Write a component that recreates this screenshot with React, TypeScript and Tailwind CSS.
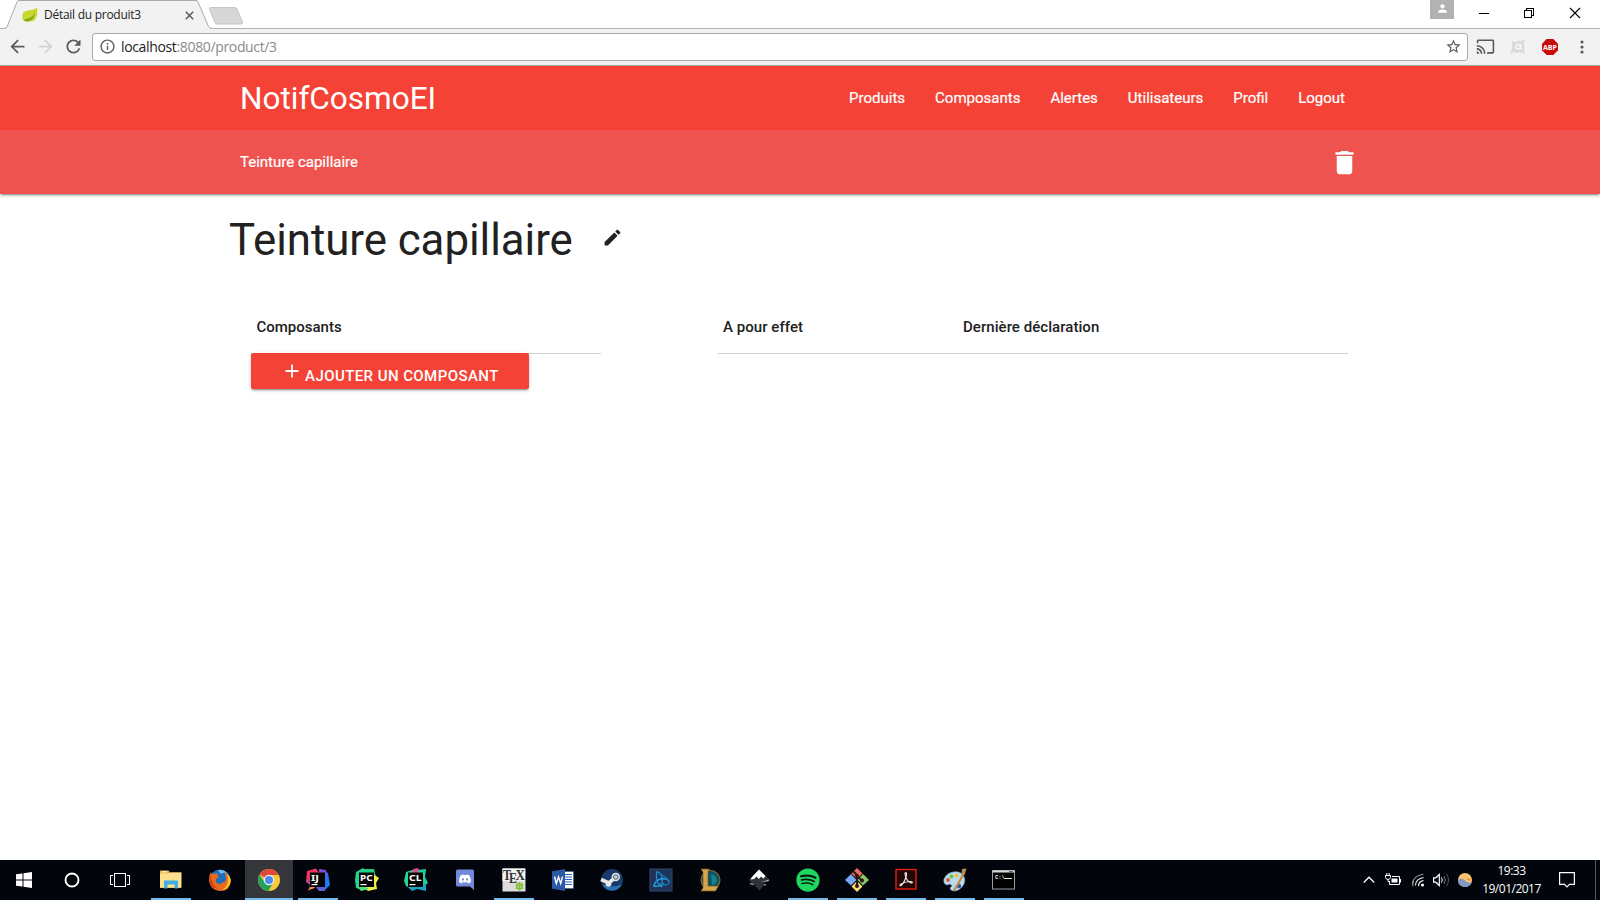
import React from "react";
import {
  MdAdd,
  MdArrowBack,
  MdArrowForward,
  MdCast,
  MdDelete,
  MdEdit,
  MdInfoOutline,
  MdPerson,
  MdRefresh,
  MdStarBorder,
} from "react-icons/md";
import { FaDiscord, FaSpotify } from "react-icons/fa";

function Tab() {
  return (
    <div className="relative ml-[4px] h-[29px] w-[208px]">
      <svg className="absolute inset-0" width="208" height="29" viewBox="0 0 208 29">
        <path d="M0 29 L1 28.500 Q2.500 28 3 26.500 L13 2 Q13.800 .5 15 .5 H192 Q193.500 .5 194 2 L204 26.500 Q204.500 28 207 28.500 V29Z" fill="#f2f2f2" />
        <path d="M0 28.500 Q2.500 28.500 3.200 26.500 L13 2 Q13.800 .5 15 .5 H192 Q193.500 .5 194 2 L204.500 26.500 Q205.500 28.500 208 28.500" fill="none" stroke="#a9a9a9" />
      </svg>
      <div className="relative flex h-[29px] items-center pl-[18px]">
        <svg width="16" height="16" viewBox="0 0 17 16" className="mt-px">
          <path d="M1 6 C3 2 12 4 16 0 C17 8 15 15 9 15 C5 15.500 2 14 1 13 C.5 11 .3 8 1 6Z" fill="#c5d82b" />
          <path d="M1 13 C7 12 12 10 14 5 C13 12 9 15 4 14.800Z" fill="#8aa51c" />
        </svg>
        <span className="ml-[6px] w-[140px] font-['Open_Sans','Noto_Sans',sans-serif] text-[12px] tracking-[-0.27px] text-[#222]">Détail du produit3</span>
        <svg width="9" height="9" viewBox="0 0 9 9" className="ml-px mt-px">
          <path d="M.8 .8 L8.200 8.200 M8.200 .8 L.8 8.200" stroke="#5a5a5a" strokeWidth="1.500" />
        </svg>
      </div>
    </div>
  );
}

function TabStrip() {
  return (
    <div className="flex h-[29px] shrink-0 bg-white bg-[linear-gradient(#b5b5b5,#b5b5b5)] bg-[length:100%_1px] bg-bottom bg-no-repeat">
      <Tab />
      <svg width="36" height="20" viewBox="0 0 36 20" className="-ml-[4px] mt-[6px]">
        <path d="M3 1.500 H26 Q28 1.500 29 3 L34.500 16 Q35 18 33 18 H9 Q7.500 18 7 16.500 L1.500 3.500 Q1 1.500 3 1.500Z" fill="#d7d7d7" stroke="#c4c4c4" />
      </svg>
      <div className="ml-auto flex">
        <div className="flex h-[19px] w-6 items-center justify-center bg-[#b2b2b2] text-white">
          <MdPerson size={13} className="-mt-[3px]" />
        </div>
        <svg width="146" height="28" viewBox="0 0 146 28" fill="none" stroke="#000" shapeRendering="crispEdges">
          <path d="M25 13.500 H35" />
          <path d="M70.500 10.500 H77.500 V17.500 H70.500Z M72.500 10.500 V8.500 H79.500 V15.500 H77.500" />
          <path d="M116 8 L126 18 M126 8 L116 18" shapeRendering="auto" strokeWidth="1.100" />
        </svg>
      </div>
    </div>
  );
}

function Toolbar() {
  return (
    <div className="flex h-[37px] shrink-0 items-center border-b border-[#aeaeae] bg-[#f2f2f2] text-[#5a5a5a]">
      <MdArrowBack size={21} className="-mt-px ml-[7px]" />
      <MdArrowForward size={21} className="-mt-px ml-[7px] text-[#d3d3d3]" />
      <MdRefresh size={21} className="-mt-px ml-[7px]" />
      <div className="ml-[8px] flex h-7 w-[1376px] items-center rounded-[3px] border border-[#a9a9a9] bg-white">
        <MdInfoOutline size={17} className="-mt-px ml-[6px]" />
        <span className="-mt-[2px] ml-[5px] font-['Open_Sans','Noto_Sans',sans-serif] text-[14px] tracking-[-0.35px] text-[#8a8a8a]">
          <span className="text-[#222]">localhost</span>:8080/product/3
        </span>
        <MdStarBorder size={17} className="-mt-px ml-auto mr-[5px]" />
      </div>
      <MdCast size={19} className="-mt-px ml-[8px]" />
      <svg width="18" height="18" viewBox="0 0 18 18" className="-mt-px ml-[14px]">
        <path d="M3 3 L7 4 Q9 2 11.500 3 L16 1 L15 6 Q16 10 15 12 L16 16 L11 14 Q7 16 5 14 L1 16 L3 10Z" fill="#dadada" />
        <circle cx="9" cy="8.700" r="2.200" fill="none" stroke="#f7f7f7" strokeWidth="1.400" />
        <path d="M11.700 5.500 V10 Q12.200 11.500 13.500 11" fill="none" stroke="#f7f7f7" strokeWidth="1.200" />
      </svg>
      <svg width="16" height="16" viewBox="0 0 16 16" className="ml-[15px]">
        <path d="M4.700 0 H11.300 L16 4.700 V11.300 L11.300 16 H4.700 L0 11.300 V4.700Z" fill="#c90808" />
        <text x="8" y="10.800" fontFamily="Open Sans" fontWeight="700" fontSize="7.800" textAnchor="middle" textLength="14" lengthAdjust="spacingAndGlyphs" fill="#fff">ABP</text>
      </svg>
      <svg width="4" height="14" viewBox="0 0 4 14" className="ml-[22px]" fill="#5a5a5a">
        <circle cx="2" cy="2" r="1.600" />
        <circle cx="2" cy="7" r="1.600" />
        <circle cx="2" cy="12" r="1.600" />
      </svg>
    </div>
  );
}

const links = ["Produits", "Composants", "Alertes", "Utilisateurs", "Profil", "Logout"];

function Nav() {
  return (
    <header className="relative shrink-0 text-white shadow-[0_2px_2px_0_rgba(0,0,0,0.14),0_1px_5px_0_rgba(0,0,0,0.12),0_3px_1px_-2px_rgba(0,0,0,0.2)]">
      <div className="h-16 bg-[#f44336]">
        <div className="mx-auto flex h-full w-[1120px] items-center justify-between">
          <span className="pt-px text-[31.5px]">NotifCosmoEI</span>
          <nav className="flex text-[15px] [-webkit-text-stroke:0.2px_white]">
            {links.map((l) => (
              <a key={l} className="px-[15px]">{l}</a>
            ))}
          </nav>
        </div>
      </div>
      <div className="h-16 bg-[#ef5350]">
        <div className="mx-auto flex h-full w-[1120px] items-center justify-between">
          <span className="text-[15px] [-webkit-text-stroke:0.2px_white]">Teinture capillaire</span>
          <MdDelete size={31} className="mt-px" />
        </div>
      </div>
    </header>
  );
}

function Content() {
  return (
    <main className="flex-1 bg-white text-[#212121]">
      <div className="ml-[229px] flex h-[107px] items-start pt-[22px]">
        <h3 className="text-[43.8px] leading-[48px] tracking-[-0.04px]">Teinture capillaire</h3>
        <MdEdit size={21} className="ml-[29px] mt-[11px]" />
      </div>
      <div className="ml-[251px] flex text-[15px] font-medium leading-[22px]">
        <div className="w-[350px]">
          <div className="h-[53px] border-b border-[#d0d0d0] pl-[5.5px] pt-[15px]">Composants</div>
          <button className="relative -mt-px flex h-9 w-[278px] rounded-[2px] bg-[#f44336] text-white shadow-[0_2px_2px_0_rgba(0,0,0,0.14),0_1px_5px_0_rgba(0,0,0,0.12),0_3px_1px_-2px_rgba(0,0,0,0.2)]">
            <MdAdd size={22} className="ml-[29.5px] mt-[7px]" />
            <span className="ml-[2.5px] mt-[12px] whitespace-nowrap text-[15px] tracking-[0.43px]">AJOUTER UN COMPOSANT</span>
          </button>
        </div>
        <div className="ml-[117px] flex h-[53px] w-[630px] border-b border-[#d0d0d0] pl-[5px] pt-[15px]">
          <span className="w-[240px] tracking-[0.05px]">A pour effet</span>
          <span className="tracking-[0.05px]">Dernière déclaration</span>
        </div>
      </div>
    </main>
  );
}

function Svg({ children }: { children: React.ReactNode }) {
  return (
    <svg width="24" height="24" viewBox="0 0 24 24">
      {children}
    </svg>
  );
}

function JetBrains({ label, children }: { label: string; children: React.ReactNode }) {
  return (
    <Svg>
      {children}
      <rect x="4" y="4.500" width="15" height="14.500" fill="#050505" />
      <text x="5" y="13" fontFamily="Noto Sans" fontWeight="700" fontSize="9.500" textLength={label === "IJ" ? 8 : 12.5} lengthAdjust="spacingAndGlyphs" fill="#fff">{label}</text>
      <rect x="5.500" y="16" width="6" height="1.200" fill="#fff" />
    </Svg>
  );
}

const apps: { name: string; open?: boolean; active?: boolean; icon: React.ReactNode }[] = [
  {
    name: "explorer",
    open: true,
    icon: (
      <Svg>
        <path d="M1 2.500 H9.500 L11 4.500 H22 V20 H1Z" fill="#e9b84a" />
        <path d="M1 5.500 H10 L12 4.500 H22.500 V19.500 H1Z" fill="#fbe08e" />
        <path d="M3 3.300 H8 V4.300 H3Z" fill="#fff" />
        <path d="M5 20.500 V12.500 H19 V20.500 H15.500 V16.500 H8.500 V20.500Z" fill="#3fb0e5" />
      </Svg>
    ),
  },
  {
    name: "firefox",
    icon: (
      <Svg>
        <circle cx="12" cy="12" r="10.500" fill="#1b6fc0" />
        <path d="M10 2.500 Q15 1 19 5 Q15 4 13 6Z" fill="#6cc1f0" />
        <path d="M3 4 Q3 6 5 6 Q8 5 10 6 Q9 8 11 9 L8 11 Q7 15 11 16 Q14 16 15 14 Q18 15 18 9 Q17 6 16 4 Q23 8 23 13 Q22 23 12 23 Q2 22 1 13 Q1 7 3 4Z" fill="#e8691b" />
        <path d="M18.500 5 Q23 9 22.500 14 Q21 21 14 22 Q20 18 20 12 Q20 8 18.500 5Z" fill="#fbc02d" />
        <path d="M3 8 Q3 17 10 21 Q1 19 1.500 12Z" fill="#c63d17" />
      </Svg>
    ),
  },
  {
    name: "chrome",
    open: true,
    active: true,
    icon: (
      <Svg>
        <circle cx="12" cy="12" r="11" fill="#f8c93a" />
        <path d="M12 12 L2.500 6.500 A11 11 0 0 1 21.500 6.500 L21.800 7 H12Z" fill="#dc4a3d" />
        <path d="M2.500 6.500 A11 11 0 0 0 11.500 23 L16.300 14.500 L12 16 L7.700 14.500Z" fill="#23a15a" />
        <circle cx="12" cy="12" r="5.200" fill="#f4f4f4" />
        <circle cx="12" cy="12" r="4.100" fill="#4a8af4" />
      </Svg>
    ),
  },
  {
    name: "intellij",
    open: true,
    icon: (
      <JetBrains label="IJ">
        <path d="M1 3 L10 .5 L14 6 L10 12 L0 14Z" fill="#f5335d" />
        <path d="M14 1 L22 5 L24 17 L18 23 L12 20Z" fill="#1e78f0" />
        <path d="M13 1 L20 2 L21 9 L13 8Z" fill="#7d4fd6" />
        <path d="M1 11 L8 14 L7 20 L2 23 L4 17 L0 14Z" fill="#b14b8e" />
        <path d="M2 22 L7 17 L9 20Z" fill="#f8933a" />
        <path d="M9 18 L18 17 L19 23 L13 23Z" fill="#635bd8" />
      </JetBrains>
    ),
  },
  {
    name: "pycharm",
    icon: (
      <JetBrains label="PC">
        <path d="M1 4 L8 0 L12 4 L7 22 L1 20 L0 12Z" fill="#27d48b" />
        <path d="M9 1 L19 1 L21 10 L12 9Z" fill="#1ecf8b" />
        <path d="M18 6 L24 10 L21 15 L22 21 L13 23 L8 19Z" fill="#f0f04a" />
        <path d="M2 18 L8 17 L14 21 L6 23Z" fill="#4adf80" />
      </JetBrains>
    ),
  },
  {
    name: "clion",
    icon: (
      <JetBrains label="CL">
        <path d="M2 4 L12 1 L14 8 L6 20 L2 18 L0 13Z" fill="#25d88f" />
        <path d="M9 1 L14 0 L17 6 L9 7Z" fill="#e7459c" />
        <path d="M14 2 L22 1 L21 9 L24 15 L17 21 L15 12Z" fill="#20cf9b" />
        <path d="M3 18 L18 17 L22 15 L22 23 L13 21 L8 23Z" fill="#18a6c4" />
      </JetBrains>
    ),
  },
  {
    name: "discord",
    icon: (
      <Svg>
        <path d="M3 3 Q3 1.500 4.500 1.500 H19.500 Q21 1.500 21 3 V22 L17 18.500 H4.500 Q3 18.500 3 17Z" fill="#7289da" />
        <FaDiscord x={5.5} y={4.5} size={13} color="#fff" />
      </Svg>
    ),
  },
  {
    name: "texstudio",
    open: true,
    icon: (
      <Svg>
        <rect x=".5" y=".5" width="23" height="23" fill="#dcdcdc" />
        <path d="M.5 .5 H23 V13 H.5Z" fill="#f4f4f4" />
        <text x="1" y="11.500" fontFamily="Liberation Serif" fontWeight="700" fontSize="14" textLength="8" lengthAdjust="spacingAndGlyphs" fill="#333">T</text>
        <text x="7" y="15" fontFamily="Liberation Serif" fontWeight="700" fontSize="14" textLength="8" lengthAdjust="spacingAndGlyphs" fill="#333">E</text>
        <text x="13.500" y="11.500" fontFamily="Liberation Serif" fontWeight="700" fontSize="14" textLength="9.500" lengthAdjust="spacingAndGlyphs" fill="#333">X</text>
        <circle cx="17.500" cy="18.300" r="2.800" fill="none" stroke="#7fbf2e" strokeWidth="1.500" />
        <path d="M17.500 14 V22.700 M13.500 16 L21.500 20.600 M13.500 20.600 L21.500 16" stroke="#7fbf2e" strokeWidth=".9" />
      </Svg>
    ),
  },
  {
    name: "word",
    icon: (
      <Svg>
        <path d="M12 3.500 H22.500 V20.500 H12Z" fill="#fff" stroke="#2a569a" strokeWidth=".6" />
        <path d="M14 6.500 H21 M14 9 H21 M14 11.500 H21 M14 14 H21 M14 16.500 H21" stroke="#2a66b8" />
        <path d="M1 3.200 L14 1 V23 L1 20.800Z" fill="#2a5aa5" />
        <path d="M3.500 8.500 L5.300 15.500 L7.500 9 L9.700 15.500 L11.500 8.500" fill="none" stroke="#fff" strokeWidth="1.400" />
      </Svg>
    ),
  },
  {
    name: "steam",
    icon: (
      <Svg>
        <circle cx="12" cy="12" r="11" fill="#173a6b" />
        <path d="M2 16 A11 11 0 0 0 22 16 Q12 21 2 16Z" fill="#2a72b4" />
        <path d="M1 11.500 L9 14.800 L13.500 11" fill="none" stroke="#e8e8e8" strokeWidth="3.600" />
        <circle cx="8.500" cy="15.800" r="2.900" fill="#e8e8e8" />
        <circle cx="15.800" cy="9" r="4.200" fill="#e8e8e8" />
        <circle cx="15.800" cy="9" r="2.300" fill="#d0d0d0" stroke="#34527c" />
      </Svg>
    ),
  },
  {
    name: "battlenet",
    icon: (
      <Svg>
        <rect x="1" y="1" width="22" height="22" fill="#1f3357" stroke="#33486e" />
        <g fill="none" strokeWidth="1.300">
          <path d="M8 3.500 Q6.500 10 9 15 Q11 19 13.500 19 M8 3.500 Q12 5 13 10 Q14 14 12 19" stroke="#1f8fd0" />
          <path d="M4.500 18 Q7 11 14 10.500 Q19 10.500 20.500 14 M4.500 18 Q10 19.500 15 15.500" stroke="#27a4e6" />
          <path d="M10 5.500 Q17 8 20.500 14 Q19 17.500 14 17 M6.500 13 Q11 17 18 16.800" stroke="#1376bc" />
        </g>
      </Svg>
    ),
  },
  {
    name: "league",
    icon: (
      <Svg>
        <circle cx="12.500" cy="12" r="9.500" fill="#0d5261" stroke="#8d6c30" strokeWidth="1.100" />
        <path d="M13 6 Q19 7 19 13 Q17 17 14 17Z" fill="#167e8e" />
        <path d="M3 1 H11.500 L10 3.500 V18 H20.500 L17.500 23 H3 L5 20 V4Z" fill="#d3a54c" stroke="#795a20" strokeWidth=".7" />
      </Svg>
    ),
  },
  {
    name: "inkscape",
    icon: (
      <Svg>
        <path d="M12 1.500 L22 11 Q23 13.500 19 13.500 L16 15 Q20 16.500 16 18 L12.500 22.500 L9 19 Q6 18 9 17 L4 14 Q1 12.500 3 10.500Z" fill="#30343a" />
        <path d="M12 1.500 L18.500 8 L16.500 10.500 L14 8.500 L12 11 L9.500 8.500 L7 11 L3.500 11.500 L5 9Z" fill="#fff" />
        <path d="M14 14 L22 11.500 Q22.500 13.500 19 13.500Z" fill="#a8adb5" />
        <path d="M3 15.500 L7 16.500 M17 16.500 L19 17" stroke="#888e96" strokeWidth="1.400" />
      </Svg>
    ),
  },
  { name: "spotify", open: true, icon: <FaSpotify size={24} className="rounded-full bg-[#0b1a10] text-[#1ed760]" /> },
  {
    name: "git",
    open: true,
    icon: (
      <Svg>
        <path d="M12 0 L17.500 5.500 L12 11 L6.500 5.500Z" fill="#ed6b63" />
        <path d="M6 6 L11.500 12 L6 17.500 L0 12Z" fill="#76a9ef" />
        <path d="M18 6 L24 12 L18 17.500 L12.500 12Z" fill="#8cc665" />
        <path d="M12 13 L17.500 18.500 L12 24 L6.500 18.500Z" fill="#f6dc72" />
        <path d="M8.500 3.500 L12 7 V18 M12 8 L17 12.500" fill="none" stroke="#2b1712" strokeWidth="2" />
        <circle cx="12" cy="18" r="2" fill="#2b1712" />
        <circle cx="17" cy="12.500" r="2" fill="#2b1712" />
        <circle cx="12" cy="8" r="2" fill="#2b1712" />
      </Svg>
    ),
  },
  {
    name: "acrobat",
    open: true,
    icon: (
      <Svg>
        <rect x="2" y="1.500" width="20" height="19.500" fill="#230707" stroke="#e81e0c" strokeWidth="1.400" />
        <path d="M11 5 Q13.500 4 12 9 Q10 15 7 17.500 Q5 18 7 16 Q11 13.500 17 13.500 Q20 14.500 17 15 Q12 13 11 6Z" fill="none" stroke="#eee" strokeWidth="1.100" />
      </Svg>
    ),
  },
  {
    name: "paint",
    open: true,
    icon: (
      <Svg>
        <path d="M8 4.500 Q16 2 20 7 Q24 13 19 19 Q13 25 8 22 Q6 20 9 18 Q8 15 4 17 Q0 16 1 11 Q3 6 8 4.500Z" fill="#b9d9ec" stroke="#7fa7bf" strokeWidth=".6" />
        <circle cx="5" cy="12" r="1.900" fill="#e0532b" />
        <circle cx="8.500" cy="8.500" r="1.900" fill="#6fbe44" />
        <circle cx="13.500" cy="7.500" r="1.900" fill="#f2c12e" />
        <circle cx="16" cy="18" r="2.200" fill="#1f5fa8" />
        <path d="M21 5 L15.500 15 L11 22.500" stroke="#cf8232" strokeWidth="2" fill="none" />
        <path d="M18.500 6 L19 1 L23.500 .5 L21.500 7Z" fill="#b98b57" />
      </Svg>
    ),
  },
  {
    name: "cmd",
    open: true,
    icon: (
      <Svg>
        <rect x=".5" y="2.500" width="22" height="18.500" fill="#000" stroke="#9c9c9c" />
        <path d="M.5 3.500 H22.500" stroke="#d8d8d8" strokeWidth="2" />
        <path d="M17 3.500 H21" stroke="#666" />
        <text x="3" y="11" fontFamily="Liberation Mono" fontWeight="700" fontSize="5.500" fill="#eee">C:\</text>
        <path d="M12.500 10.500 H20" stroke="#eee" />
      </Svg>
    ),
  },
];

function Taskbar() {
  return (
    <footer className="flex h-10 shrink-0 bg-[#02050b] text-white">
      <div className="flex w-12 items-center justify-center">
        <svg width="16" height="16" viewBox="0 0 16 16" fill="#fff">
          <path d="M0 2.300 L6.500 1.400 V7.500 H0Z M7.500 1.200 L16 0 V7.500 H7.500Z M0 8.500 H6.500 V14.600 L0 13.700Z M7.500 8.500 H16 V16 L7.500 14.800Z" />
        </svg>
      </div>
      <div className="flex w-12 items-center justify-center">
        <svg width="16" height="16" viewBox="0 0 16 16">
          <circle cx="8" cy="8" r="6.500" fill="none" stroke="#fff" strokeWidth="1.900" />
        </svg>
      </div>
      <div className="flex w-[51px] items-center pl-[14px]">
        <svg width="20" height="14" viewBox="0 0 20 14" fill="none" stroke="#fff" shapeRendering="crispEdges">
          <path d="M4.500 .5 H15.500 V13.500 H4.500Z M3 2.500 H.5 V11.500 H3 M17 2.500 H19.500 V11.500 H17" />
        </svg>
      </div>
      <div className="flex gap-px">
        {apps.map((a) => (
          <div key={a.name} className={a.active ? "flex w-12 flex-col items-center bg-[#353639]" : "flex w-12 flex-col items-center"}>
            <div className="flex h-[38px] items-center pt-[2px]">{a.icon}</div>
            {a.open && <div className={a.active ? "h-[2px] w-12 bg-[#76b9ed]" : "h-[2px] w-10 bg-[#76b9ed]"} />}
          </div>
        ))}
      </div>
      <div className="ml-auto flex items-center">
        <svg width="12" height="8" viewBox="0 0 12 8" fill="none" stroke="#fff" strokeWidth="1.300">
          <path d="M.7 6.500 L6 1.200 L11.300 6.500" />
        </svg>
        <svg width="17" height="13" viewBox="0 0 17 13" className="-mt-px ml-[10px]" fill="none" stroke="#fff">
          <path d="M7 3.500 H14.500 V11.500 H4.500 V8" />
          <path d="M15 6 H16 V9.500 H15Z" fill="#fff" stroke="none" />
          <path d="M6.500 5.500 H12.500 V9.500 H6.500Z" fill="#fff" stroke="none" />
          <path d="M.5 2.500 H5.500 V4.500 Q5 6.500 3 6.500 Q1 6.500 .5 4.500Z M1.800 0 V2.500 M4.200 0 V2.500 M3 6.500 V8.500 H5" />
        </svg>
        <svg width="14" height="14" viewBox="0 0 14 14" className="ml-[9px]" fill="none" stroke="#fff" strokeWidth="1.100">
          <path d="M7.500 13 Q7.500 8.500 12.500 7.500" />
          <path d="M4.500 12.500 Q4.500 6 12.500 4.500" />
          <path d="M1.200 10.500 Q3 2.500 12.500 1.200" stroke="#8a8c90" />
          <path d="M2 13 Q1 10 2.500 8" stroke="#aaa" />
          <circle cx="11.500" cy="12" r="1.500" fill="#fff" stroke="none" />
        </svg>
        <svg width="17" height="14" viewBox="0 0 17 14" className="ml-[8px]" fill="none" stroke="#fff">
          <path d="M.6 4.800 H2.800 L6.300 1.500 V12.500 L2.800 9.200 H.6Z" strokeWidth="1.200" />
          <path d="M8.500 4.500 Q10 7 8.500 9.500" />
          <path d="M11 3 Q13.500 7 11 11" stroke="#777" />
          <path d="M13.500 1 Q17.500 7 13.500 13" stroke="#555" />
        </svg>
        <svg width="14" height="14" viewBox="0 0 14 14" className="ml-[8px]">
          <circle cx="7" cy="7" r="7" fill="#fbc470" />
          <path d="M0 7 Q3 4 6.500 7 Q9.500 10.500 13.500 9.500 A7 7 0 0 1 0 7Z" fill="#7f98c8" />
          <path d="M8 6 Q11 4.500 13 7.500 Q10 7.500 8 6Z" fill="#f08a24" />
        </svg>
        <div className="ml-[10px] flex w-[59px] flex-col items-center whitespace-nowrap font-['Open_Sans','Noto_Sans',sans-serif] text-[12px] leading-[18px] tracking-[-0.5px]">
          <span>19:33</span>
          <span>19/01/2017</span>
        </div>
        <svg width="16" height="16" viewBox="0 0 16 16" className="ml-[18px]" fill="none" stroke="#fff" strokeWidth="1.200">
          <path d="M.6 .6 H15.400 V12.400 H10.500 L8 15 L5.500 12.400 H.6Z" />
        </svg>
        <div className="ml-5 mr-1 h-10 w-px bg-[#55585d]" />
      </div>
    </footer>
  );
}

export default function App() {
  return (
    <div className="flex h-[900px] w-[1600px] flex-col overflow-hidden bg-white font-[Roboto,sans-serif]">
      <TabStrip />
      <Toolbar />
      <Nav />
      <Content />
      <Taskbar />
    </div>
  );
}
